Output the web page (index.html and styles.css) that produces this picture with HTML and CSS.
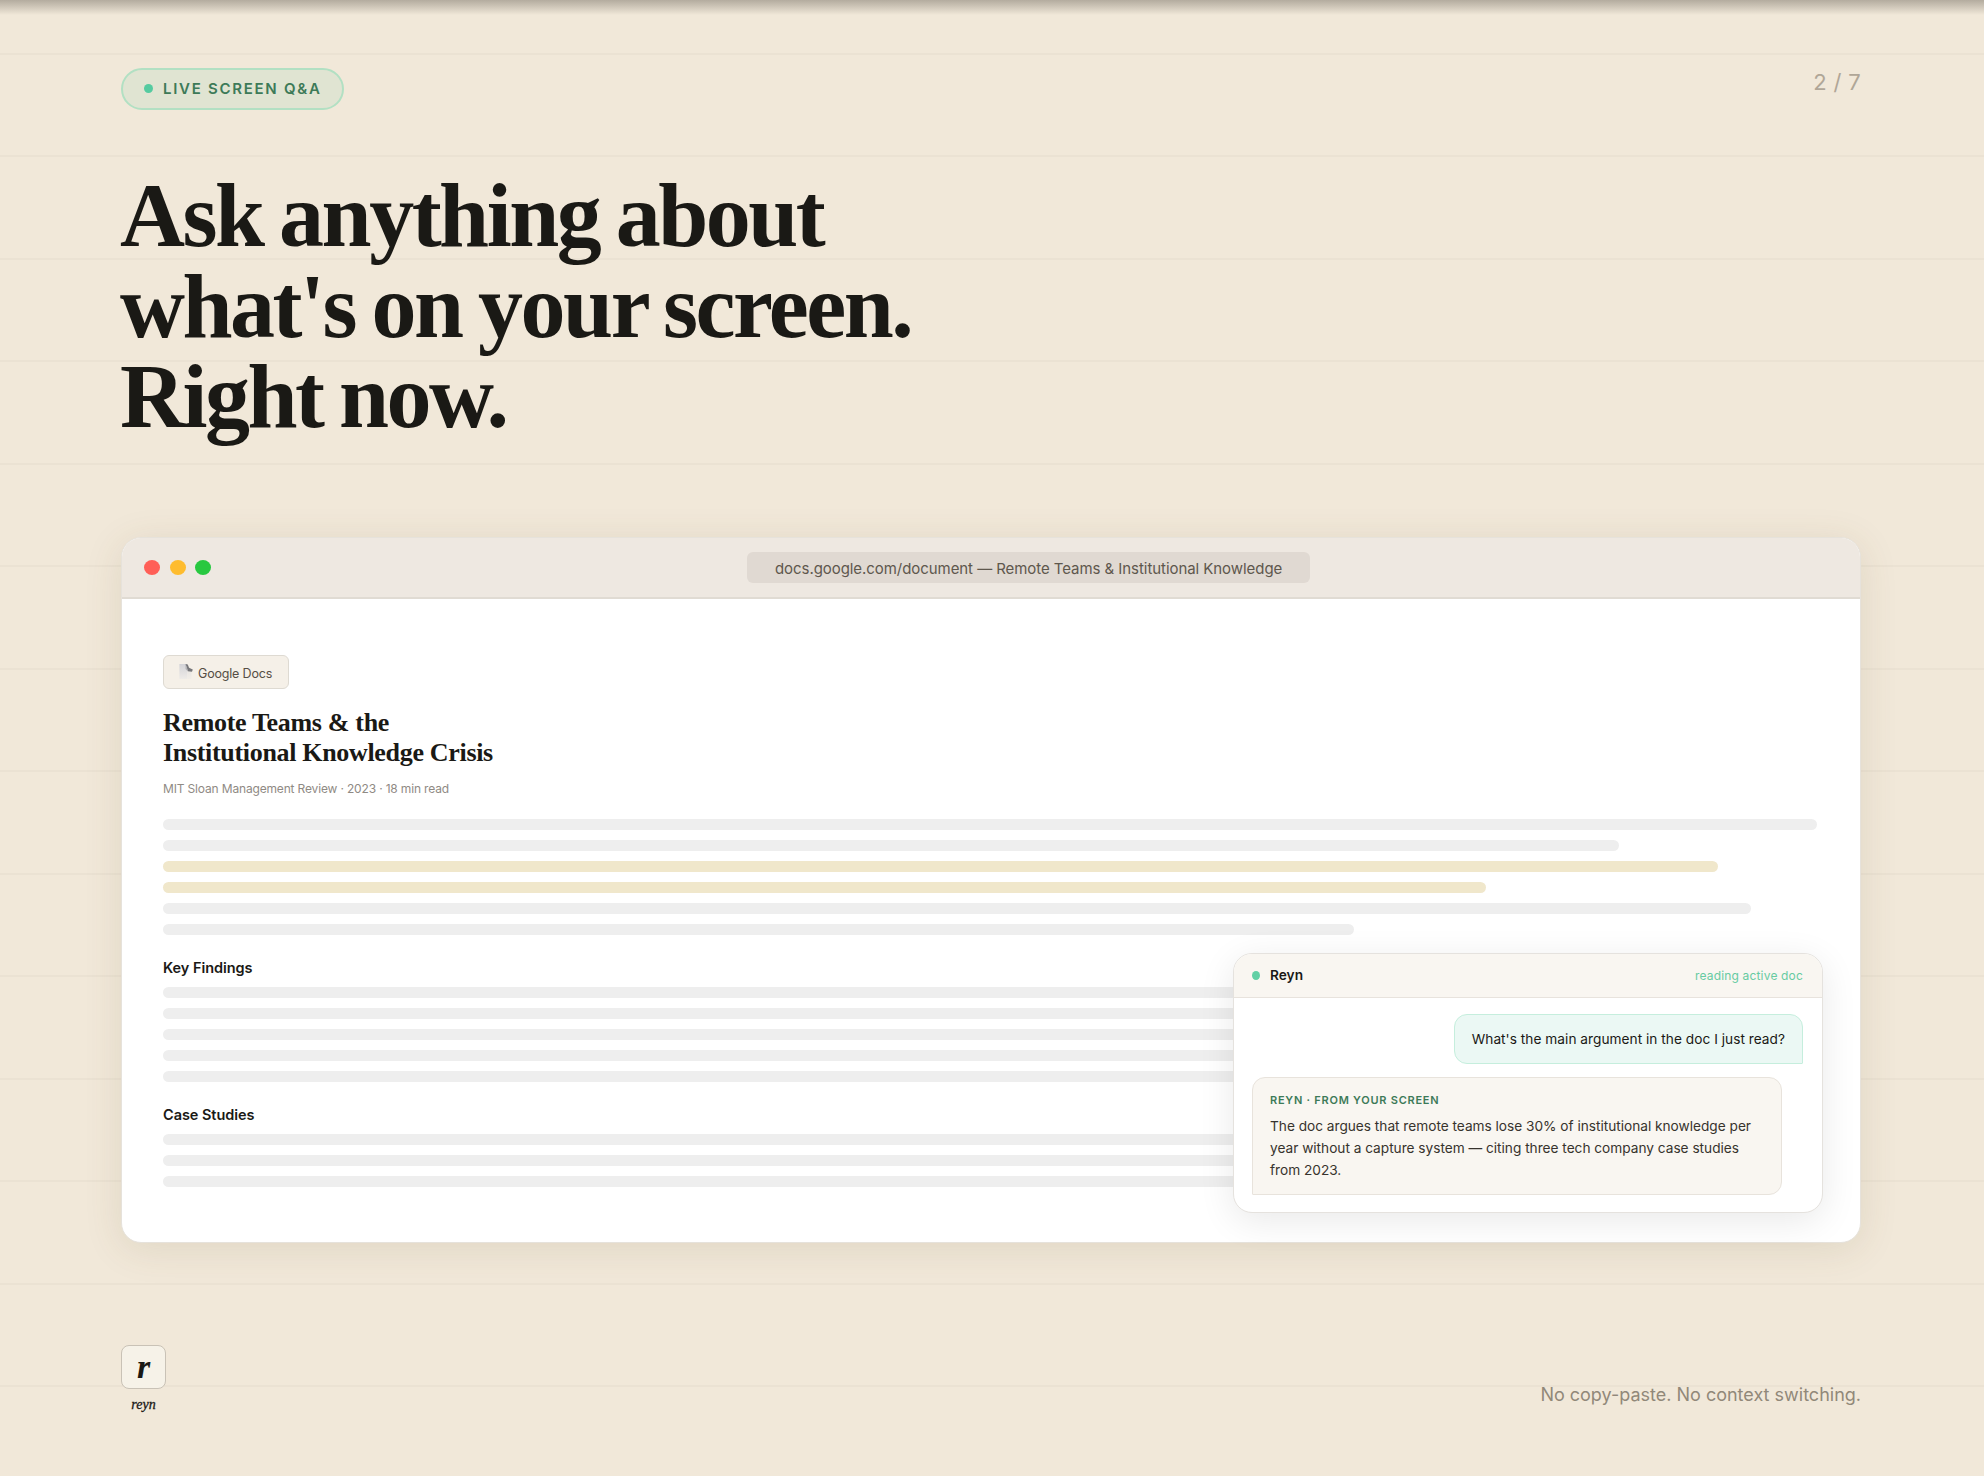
FILE: index.html
```
<!DOCTYPE html>
<html lang="en">
<head>
  <meta charset="UTF-8" />
  <meta name="viewport" content="width=device-width, initial-scale=1.0"/>
  <title>Reyn - Live Screen Q&amp;A</title>
  <link rel="stylesheet" href="styles.css">
</head>
<body>
  <div class="slide">
    <header class="top">
      <div class="badge"><span class="badge-dot"></span><span class="badge-text">LIVE SCREEN Q&amp;A</span></div>
      <div class="page-num">2 / 7</div>
    </header>

    <h1>Ask anything about<br>what's on your screen.<br>Right now.</h1>

    <div class="window">
      <div class="window-bar">
        <div class="lights">
          <span class="light red"></span>
          <span class="light yellow"></span>
          <span class="light green"></span>
        </div>
        <div class="url-wrap">
          <div class="url">docs.google.com/document — Remote Teams &amp; Institutional Knowledge</div>
        </div>
      </div>

      <div class="doc">
        <div class="chip">
          <svg class="chip-icon" width="14" height="17" viewBox="0 0 14 17">
            <defs>
              <linearGradient id="page" x1="0" y1="0" x2="0" y2="1">
                <stop offset="0" stop-color="#d3d3d7"/>
                <stop offset="1" stop-color="#eeebe8"/>
              </linearGradient>
            </defs>
            <path d="M0.5 1H7L12.5 7V16H0.5Z" fill="url(#page)" opacity="0.55"/>
            <path d="M0.5 1H8V16H0.5Z" fill="url(#page)"/>
            <path d="M6.5 1L8.8 1.6L10 4.8L13.8 6.6L13 8.8L8.8 8.2Z" fill="#77777a"/>
            <path d="M6.5 1L8.2 5.2L8.8 8.2L6.5 6Z" fill="#b5b5b8"/>
          </svg>
          <span>Google Docs</span>
        </div>
        <h2>Remote Teams &amp; the<br>Institutional Knowledge Crisis</h2>
        <div class="meta">MIT Sloan Management Review · 2023 · 18 min read</div>

        <div class="lines">
          <div class="line"></div>
          <div class="line w88"></div>
          <div class="line w94 hl"></div>
          <div class="line w80 hl"></div>
          <div class="line w96"></div>
          <div class="line w72"></div>
        </div>

        <h3>Key Findings</h3>
        <div class="lines">
          <div class="line"></div>
          <div class="line w88"></div>
          <div class="line w94"></div>
          <div class="line w80"></div>
          <div class="line w88"></div>
        </div>

        <h3>Case Studies</h3>
        <div class="lines">
          <div class="line w94"></div>
          <div class="line w88"></div>
          <div class="line w80"></div>
        </div>
      </div>

      <div class="chat">
        <div class="chat-head">
          <span class="chat-dot"></span>
          <span class="chat-name">Reyn</span>
          <span class="chat-status">reading active doc</span>
        </div>
        <div class="chat-body">
          <div class="msg-user">What's the main argument in the doc I just read?</div>
          <div class="msg-reyn">
            <div class="msg-label">REYN · FROM YOUR SCREEN</div>
            <p>The doc argues that remote teams lose 30% of institutional knowledge per<br>year without a capture system — citing three tech company case studies<br>from 2023.</p>
          </div>
        </div>
      </div>
    </div>

    <footer class="bottom">
      <div class="logo">
        <div class="logo-box">r</div>
        <div class="logo-name">reyn</div>
      </div>
      <div class="tagline">No copy-paste. No context switching.</div>
    </footer>
  </div>
</body>
</html>
```
FILE: styles.css
```
:root {
  --paper: #f1e8d9;
  --rule: #ebe2d3;
  --ink: #1a1915;
  --mint: #55cba0;
  --green: #3d7a58;
  --bar: #eeeeee;
  --sans: Inter, "Open Sans", sans-serif;
  --serif: "Liberation Serif", serif;
}

* {
  box-sizing: border-box;
}

body {
  margin: 0;
  font-family: var(--sans);
  color: var(--ink);
}

h1, h2, h3, p {
  margin: 0;
}

.slide {
  position: relative;
  width: 1984px;
  height: 1476px;
  padding: 68px 123px 0 121px;
  overflow: hidden;
  background-color: var(--paper);
  background-image: repeating-linear-gradient(to bottom, transparent 0, transparent 100.5px, var(--rule) 100.5px, var(--rule) 102.5px);
  background-position: 0 -47.5px;
  background-size: 100% 1640px;
}

/* shade along the top edge */
.slide::before {
  content: "";
  position: absolute;
  top: 0;
  left: 0;
  right: 0;
  height: 15px;
  background: linear-gradient(to bottom, rgba(70, 65, 55, 0.36), rgba(70, 65, 55, 0.22) 40%, rgba(70, 65, 55, 0));
}

.top {
  display: flex;
  justify-content: space-between;
  align-items: flex-start;
}

.badge {
  display: flex;
  align-items: center;
  height: 42px;
  width: 223px;
  padding-left: 21px;
  border: 2px solid #b2e0c3;
  border-radius: 21px;
  background: #e0e4d2;
  color: var(--green);
  font-size: 15px;
  font-weight: 600;
  letter-spacing: 1.72px;
}

.badge-dot {
  width: 9px;
  height: 9px;
  margin: 0 10px 1px 0;
  border-radius: 50%;
  background: var(--mint);
}

.badge-text {
  padding-bottom: 1px;
}

.page-num {
  color: #b0a697;
  font-size: 22px;
  line-height: 28px;
  letter-spacing: 0.3px;
}

h1 {
  margin: 61px 0 0 -1px;
  font-family: var(--serif);
  font-size: 90px;
  font-weight: 700;
  line-height: 90.6px;
  letter-spacing: -2.5px;
  word-spacing: -3.5px;
}

.window {
  position: relative;
  height: 706px;
  margin-top: 94px;
  border: 1.5px solid #e6e2db;
  border-radius: 20px;
  background: #fff;
  box-shadow: 0 6px 38px rgba(100, 80, 40, 0.12);
}

.window-bar {
  display: flex;
  align-items: center;
  height: 61px;
  padding: 0 24px 0 22px;
  border-bottom: 2px solid #e0dbd3;
  border-radius: 19px 19px 0 0;
  background: #eee8e1;
}

.lights {
  display: flex;
  gap: 9.6px;
  margin-right: 10px;
}

.light {
  width: 16px;
  height: 15px;
  border-radius: 50%;
}

.red { background: #ff5f57; }
.yellow { background: #febc2e; }
.green { background: #28c840; }

.url-wrap {
  flex: 1;
  display: flex;
  justify-content: center;
}

.url {
  width: 563px;
  height: 31px;
  border-radius: 6px;
  background: #e0d9d2;
  color: #5e574d;
  font-size: 15px;
  line-height: 33px;
  letter-spacing: -0.06px;
  text-align: center;
}

.doc {
  padding: 56px 43px 0 41px;
}

.chip {
  display: flex;
  align-items: center;
  width: 126px;
  height: 34px;
  padding-left: 15px;
  border: 1.5px solid #dedad2;
  border-radius: 6px;
  background: #f5f0e8;
  color: #554e45;
  font-size: 12.5px;
  letter-spacing: -0.18px;
}

.chip-icon {
  margin-right: 5px;
}

.chip span {
  padding-top: 3px;
}

h2 {
  margin-top: 19px;
  font-family: var(--serif);
  font-size: 26px;
  font-weight: 700;
  line-height: 30px;
  letter-spacing: -0.32px;
}

.meta {
  margin: 13px 0 22px;
  color: #8f8a84;
  font-size: 12px;
  line-height: 16px;
  letter-spacing: -0.16px;
}

.lines {
  display: flex;
  flex-direction: column;
  gap: 10.1px;
}

.line {
  height: 11px;
  border-radius: 6px;
  background: var(--bar);
}

.hl { background: #f0e7cb; }

.w96 { width: 96%; }
.w94 { width: 94%; }
.w88 { width: 88%; }
.w80 { width: 80%; }
.w72 { width: 72%; }

h3 {
  margin: 22.5px 0 9px;
  font-size: 14.5px;
  font-weight: 600;
  line-height: 20px;
  letter-spacing: -0.05px;
}

.chat {
  position: absolute;
  right: 37px;
  bottom: 29px;
  width: 590px;
  height: 260px;
  border: 1.5px solid #e5e2de;
  border-radius: 19px;
  background: #fff;
  box-shadow: 0 8px 36px rgba(0, 0, 0, 0.09);
}

.chat-head {
  display: flex;
  align-items: center;
  height: 44px;
  padding: 0 19px 0 18px;
  border-bottom: 1.5px solid #e8e3dd;
  border-radius: 18px 18px 0 0;
  background: #f9f6f1;
}

.chat-dot {
  width: 8px;
  height: 9px;
  margin-right: 10px;
  border-radius: 50%;
  background: #62d0a5;
}

.chat-name {
  font-size: 13.7px;
  font-weight: 600;
}

.chat-status {
  margin-left: auto;
  color: #67cba2;
  font-size: 12px;
  letter-spacing: 0.17px;
}

.chat-body {
  display: flex;
  flex-direction: column;
  align-items: flex-start;
  gap: 13px;
  padding: 16px 19px 0 18px;
}

.msg-user {
  align-self: flex-end;
  height: 50px;
  padding: 0 17px;
  border: 1.5px solid #c5eedd;
  border-radius: 13px 13px 1px 13px;
  background: #ebf8f4;
  font-size: 13.7px;
  line-height: 49px;
  letter-spacing: 0.02px;
}

.msg-reyn {
  width: 530px;
  height: 118px;
  padding: 13px 17px;
  border: 1.5px solid #e8e3dc;
  border-radius: 13px 13px 13px 1px;
  background: #f9f6f1;
}

.msg-label {
  margin-bottom: 6px;
  color: var(--green);
  font-size: 11px;
  font-weight: 600;
  line-height: 18px;
  letter-spacing: 0.75px;
}

.msg-reyn p {
  color: #37332d;
  font-size: 13.7px;
  line-height: 22px;
  letter-spacing: -0.02px;
  white-space: nowrap;
}

.bottom {
  display: flex;
  justify-content: space-between;
  align-items: flex-start;
  margin-top: 102px;
}

.logo {
  display: flex;
  flex-direction: column;
  align-items: center;
  width: 45px;
  font-family: var(--serif);
  font-style: italic;
}

.logo-box {
  width: 45px;
  height: 44px;
  border: 1.5px solid #c9c2b6;
  border-radius: 8px;
  background: #f6f2e8;
  font-size: 34px;
  font-weight: 700;
  line-height: 42px;
  text-align: center;
}

.logo-name {
  margin-top: 7px;
  font-size: 14px;
  line-height: 18px;
  -webkit-text-stroke: 0.3px var(--ink);
}

.tagline {
  margin-top: 38px;
  color: #918879;
  font-size: 18px;
  line-height: 24px;
}
```
